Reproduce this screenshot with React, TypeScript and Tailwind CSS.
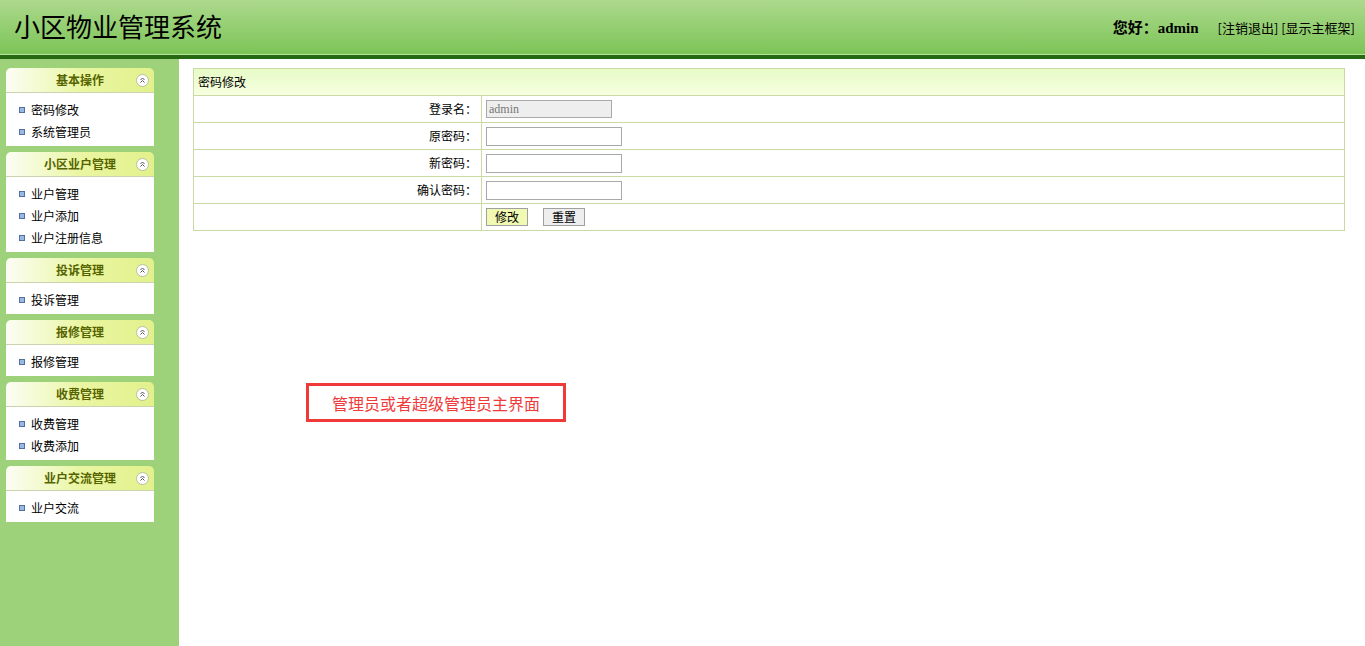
import React from 'react';

const CJK = '"Noto Sans CJK SC", "Noto Sans", sans-serif';
const SERIF = '"Liberation Serif", "Noto Sans CJK SC", serif';

const menus: { title: string; items: string[] }[] = [
  { title: '基本操作', items: ['密码修改', '系统管理员'] },
  { title: '小区业户管理', items: ['业户管理', '业户添加', '业户注册信息'] },
  { title: '投诉管理', items: ['投诉管理'] },
  { title: '报修管理', items: ['报修管理'] },
  { title: '收费管理', items: ['收费管理', '收费添加'] },
  { title: '业户交流管理', items: ['业户交流'] },
];

function CollapseIcon() {
  return (
    <svg width="13" height="13" viewBox="0 0 13 13" className="absolute right-[5px] top-[6px]">
      <circle cx="6.5" cy="6.5" r="6" fill="#ffffff" stroke="#b8c0a0" />
      <path d="M4.5 6 L6.5 4 L8.5 6 M4.5 8.5 L6.5 6.5 L8.5 8.5" fill="none" stroke="#555" strokeWidth="1" />
    </svg>
  );
}

function MenuPanel({ title, items }: { title: string; items: string[] }) {
  return (
    <div className="w-[148px]">
      {/* panel header */}
      <div className="relative h-[25px] rounded-t-[5px] border-b border-[#c9d3ae] bg-gradient-to-r from-[#fcfdf4] via-[#eaf6a2] to-[#e2f18c] flex items-center justify-center">
        <span className="text-[12px] font-bold text-[#566400]">{title}</span>
        <CollapseIcon />
      </div>
      {/* panel body */}
      <ul className="bg-white pt-[6px] pb-[3px]">
        {items.map((it) => (
          <li key={it} className="h-[22px] flex items-center pl-[13px] text-[12px] text-black">
            <span className="w-[6px] h-[6px] bg-[#9ab8e4] border border-[#53709c] mr-[6px]" />
            {it}
          </li>
        ))}
      </ul>
    </div>
  );
}

function FormRow({ label, children }: { label: string; children?: React.ReactNode }) {
  return (
    <div className="grid grid-cols-[288px_1fr] h-[27px] border-t border-[#cbd9a6]">
      <div className="flex items-center justify-end pr-[4px] border-r border-[#cbd9a6] text-[12px]">{label}</div>
      <div className="flex items-center pl-[4px]">{children}</div>
    </div>
  );
}

export default function App() {
  return (
    <div className="w-[1365px] h-[646px] flex flex-col overflow-hidden bg-white" style={{ fontFamily: CJK }}>
      {/* Top banner */}
      <header className="h-[54px] bg-gradient-to-b from-[#acd98c] to-[#7cc456] flex items-center justify-between pl-[14px] pr-[10px]">
        <h1 className="text-[26px] text-black pt-[2px]" style={{ fontFamily: SERIF }}>
          小区物业管理系统
        </h1>
        <div className="flex items-center pt-[2px]">
          <span className="text-[15px] font-bold text-black" style={{ fontFamily: SERIF }}>
            您好：admin
          </span>
          <span className="text-[13px] text-black ml-[19px]">[注销退出] [显示主框架]</span>
        </div>
      </header>
      <div className="h-px bg-[#b9e29b]" />
      <div className="h-[4px] bg-[#256a12]" />

      <div className="flex flex-1">
        {/* Left menu */}
        <aside className="w-[179px] bg-[#9dd27b] pt-[9px] pl-[6px] flex flex-col gap-[6px]">
          {menus.map((m) => (
            <MenuPanel key={m.title} title={m.title} items={m.items} />
          ))}
        </aside>

        {/* Main area */}
        <main className="flex-1 pt-[9px] pl-[14px] pr-[20px]">
          <div className="border border-[#cbd9a6]">
            <div className="h-[26px] bg-gradient-to-b from-[#e6fbc6] to-[#f7ffe0] flex items-center pl-[4px] text-[12px]">
              密码修改
            </div>
            <FormRow label="登录名：">
              <div
                className="w-[126px] h-[18px] border border-[#a9a9a9] bg-[#eeeeee] text-[12px] text-[#777] flex items-center pl-[2px]"
                style={{ fontFamily: SERIF }}
              >
                admin
              </div>
            </FormRow>
            <FormRow label="原密码：">
              <div className="w-[136px] h-[19px] border border-[#a9a9a9] bg-white" />
            </FormRow>
            <FormRow label="新密码：">
              <div className="w-[136px] h-[19px] border border-[#a9a9a9] bg-white" />
            </FormRow>
            <FormRow label="确认密码：">
              <div className="w-[136px] h-[19px] border border-[#a9a9a9] bg-white" />
            </FormRow>
            <FormRow label="">
              <div className="flex items-center gap-[15px]">
                <button className="w-[42px] h-[18px] border border-[#a0a0a0] bg-[#f2f9b2] text-[12px] leading-none">修改</button>
                <button className="w-[42px] h-[18px] border border-[#a0a0a0] bg-[#eeeeee] text-[12px] leading-none">重置</button>
              </div>
            </FormRow>
          </div>

          <div className="mt-[152px] ml-[113px] w-[260px] h-[39px] border-[3px] border-[#f03a3a] flex items-center justify-center text-[16px] text-[#f03a3a]">
            管理员或者超级管理员主界面
          </div>
        </main>
      </div>
    </div>
  );
}
